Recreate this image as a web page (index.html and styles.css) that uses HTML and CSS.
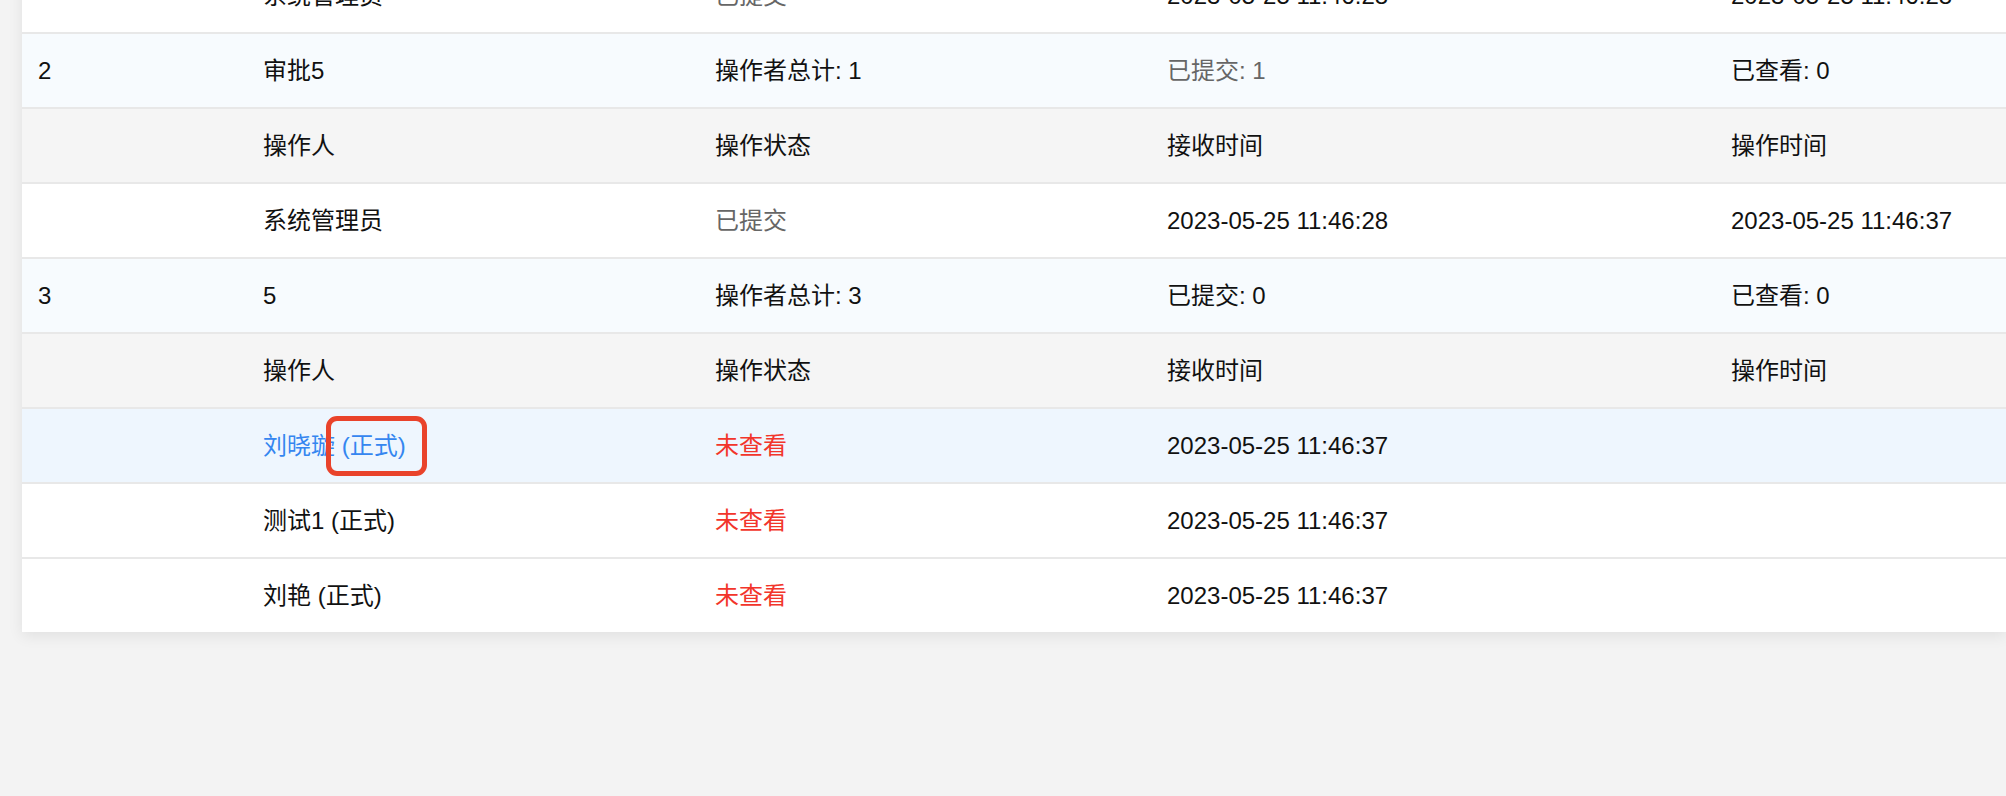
FILE: index.html
```html
<!DOCTYPE html>
<html lang="zh-CN">
<head>
<meta charset="utf-8">
<title>审批记录</title>
<link rel="stylesheet" href="styles.css">
</head>
<body>
<div class="page">
  <div class="card">
    <table class="grid">
      <colgroup>
        <col class="c1"><col class="c2"><col class="c3"><col class="c4"><col class="c5">
      </colgroup>
      <tbody>
        <tr class="row">
          <td></td>
          <td>系统管理员</td>
          <td class="muted">已提交</td>
          <td>2023-05-25 11:46:28</td>
          <td>2023-05-25 11:46:28</td>
        </tr>
        <tr class="row node">
          <td>2</td>
          <td>审批5</td>
          <td>操作者总计: 1</td>
          <td class="muted">已提交: 1</td>
          <td>已查看: 0</td>
        </tr>
        <tr class="row head">
          <td></td>
          <td>操作人</td>
          <td>操作状态</td>
          <td>接收时间</td>
          <td>操作时间</td>
        </tr>
        <tr class="row">
          <td></td>
          <td>系统管理员</td>
          <td class="muted">已提交</td>
          <td>2023-05-25 11:46:28</td>
          <td>2023-05-25 11:46:37</td>
        </tr>
        <tr class="row node">
          <td>3</td>
          <td>5</td>
          <td>操作者总计: 3</td>
          <td>已提交: 0</td>
          <td>已查看: 0</td>
        </tr>
        <tr class="row head">
          <td></td>
          <td>操作人</td>
          <td>操作状态</td>
          <td>接收时间</td>
          <td>操作时间</td>
        </tr>
        <tr class="row hover">
          <td></td>
          <td><span class="link">刘晓璇 <span class="tag">(正式)<span class="mark"></span></span></span></td>
          <td class="warn">未查看</td>
          <td>2023-05-25 11:46:37</td>
          <td></td>
        </tr>
        <tr class="row">
          <td></td>
          <td>测试1 (正式)</td>
          <td class="warn">未查看</td>
          <td>2023-05-25 11:46:37</td>
          <td></td>
        </tr>
        <tr class="row last">
          <td></td>
          <td>刘艳 (正式)</td>
          <td class="warn">未查看</td>
          <td>2023-05-25 11:46:37</td>
          <td></td>
        </tr>
      </tbody>
    </table>
  </div>
</div>
</body>
</html>
```
FILE: styles.css
```css
html, body {
  margin: 0;
  padding: 0;
  height: 100%;
  overflow: hidden;
  background: #f3f3f3;
}

body {
  font-family: "Liberation Sans", "Noto Sans CJK SC", sans-serif;
  font-size: 24px;
  color: #111;
}

.page {
  padding-left: 22px;
}

.card {
  width: 1984px;
  margin-top: -41px;
  background: #fff;
  box-shadow: 0 4px 14px rgba(0, 0, 0, 0.08);
}

.grid {
  width: 100%;
  border-collapse: collapse;
  table-layout: fixed;
}

.c1 { width: 225px; }
.c2 { width: 452px; }
.c3 { width: 452px; }
.c4 { width: 564px; }
.c5 { width: 291px; }

.row td {
  height: 73px;
  padding: 0 0 0 16px;
  border-bottom: 2px solid #e8e8e8;
  vertical-align: middle;
  white-space: nowrap;
  line-height: 36px;
}

.row.last td {
  border-bottom: none;
}

.node { background: #f7fbfe; }
.head { background: #f5f5f5; }
.hover { background: #eef6fe; }

.muted { color: #666; }
.warn { color: #f2352b; }
.link { color: #3586f0; }

.tag {
  position: relative;
  display: inline-block;
}

.mark {
  position: absolute;
  left: -16px;
  right: -21px;
  top: -12px;
  bottom: -12px;
  border: 5px solid #e9432b;
  border-radius: 11px;
}
```
